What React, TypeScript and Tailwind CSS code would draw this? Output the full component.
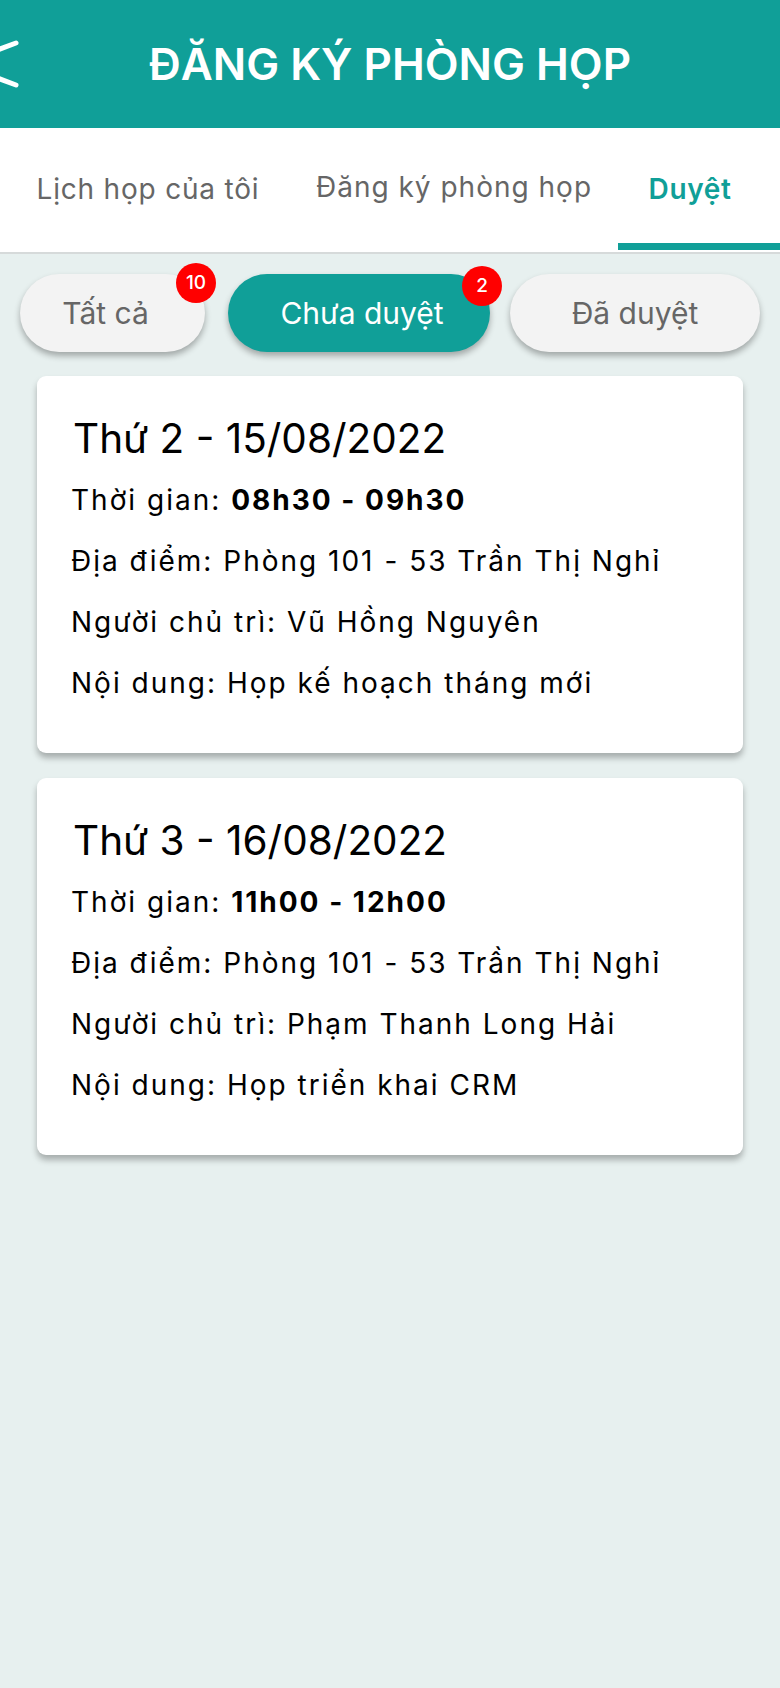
import React from "react";

const font = { fontFamily: "Inter, 'Noto Sans', sans-serif" };

type Meeting = {
  day: string;
  time: string;
  place: string;
  host: string;
  content: string;
};

const meetings: Meeting[] = [
  {
    day: "Thứ 2 - 15/08/2022",
    time: "08h30 - 09h30",
    place: "Phòng 101 - 53 Trần Thị Nghỉ",
    host: "Vũ Hồng Nguyên",
    content: "Họp kế hoạch tháng mới",
  },
  {
    day: "Thứ 3 - 16/08/2022",
    time: "11h00 - 12h00",
    place: "Phòng 101 - 53 Trần Thị Nghỉ",
    host: "Phạm Thanh Long Hải",
    content: "Họp triển khai CRM",
  },
];

function MeetingCard({ m }: { m: Meeting }) {
  return (
    <div className="mx-[37px] w-[706px] rounded-[9px] bg-white pl-[34px] pr-4 pt-[39px] pb-[39px] shadow-[0_5px_6px_rgba(0,0,0,0.28)]">
      <div className="ml-[2px] text-[40.5px] leading-[48px] text-black">{m.day}</div>
      <div className="mt-[7px] text-[28px] leading-[61px] tracking-[2px] text-black">
        <div>
          Thời gian: <span className="font-bold">{m.time}</span>
        </div>
        <div>Địa điểm: {m.place}</div>
        <div>Người chủ trì: {m.host}</div>
        <div>Nội dung: {m.content}</div>
      </div>
    </div>
  );
}

export default function App() {
  return (
    <div className="min-h-[1688px] w-[780px] bg-[#e7f0ef]" style={font}>
      {/* Header */}
      <div className="relative flex h-[128px] items-center justify-center bg-[#109f98]">
        <svg
          className="absolute left-0 top-0"
          width="24"
          height="128"
          viewBox="0 0 24 128"
        >
          <polyline
            points="16,43 -40,64 16,85"
            fill="none"
            stroke="white"
            strokeWidth="5"
            strokeLinecap="round"
            strokeLinejoin="round"
          />
        </svg>
        <div className="text-[44px] font-semibold leading-none text-white">
          ĐĂNG KÝ PHÒNG HỌP
        </div>
      </div>

      {/* Tabs */}
      <div className="flex h-[126px] border-b-2 border-[#d6dada] bg-white">
        <div className="flex w-[296px] items-center justify-center pb-[2px] text-[28px] tracking-[0.8px] text-[#666666]">
          Lịch họp của tôi
        </div>
        <div className="flex w-[322px] items-center justify-center pb-[6px] pr-[6px] text-[28px] tracking-[1px] text-[#666666]">
          Đăng ký phòng họp
        </div>
        <div className="relative flex w-[162px] items-center justify-center pb-[2px] pr-[18px] text-[28px] font-semibold tracking-[0.6px] text-[#109f98]">
          Duyệt
          <div className="absolute bottom-[2px] left-0 right-0 h-[7px] bg-[#109f98]" />
        </div>
      </div>

      {/* Filter chips */}
      <div className="flex items-start pl-[20px] pt-[20px]">
        <div className="relative flex h-[78px] w-[185px] items-center justify-center rounded-full bg-[#f3f3f3] pr-[14px] text-[30px] text-[#666666] shadow-[0_4px_6px_rgba(0,0,0,0.3)]">
          Tất cả
          <div className="absolute right-[-11px] top-[-11px] flex h-[40px] w-[40px] items-center justify-center rounded-full bg-[#ff0000] text-[19px] font-medium tracking-normal text-white">
            10
          </div>
        </div>
        <div className="relative ml-[23px] flex h-[78px] w-[262px] items-center justify-center rounded-full bg-[#109f98] pl-[6px] text-[30px] text-white shadow-[0_4px_6px_rgba(0,0,0,0.3)]">
          Chưa duyệt
          <div className="absolute right-[-12px] top-[-8px] flex h-[40px] w-[40px] items-center justify-center rounded-full bg-[#ff0000] text-[19px] font-medium text-white">
            2
          </div>
        </div>
        <div className="relative ml-[20px] flex h-[78px] w-[250px] items-center justify-center rounded-full bg-[#f3f3f3] text-[30px] text-[#666666] shadow-[0_4px_6px_rgba(0,0,0,0.3)]">
          Đã duyệt
        </div>
      </div>

      {/* Cards */}
      <div className="mt-[24px] flex flex-col gap-[25px]">
        {meetings.map((m) => (
          <MeetingCard key={m.day} m={m} />
        ))}
      </div>
    </div>
  );
}
